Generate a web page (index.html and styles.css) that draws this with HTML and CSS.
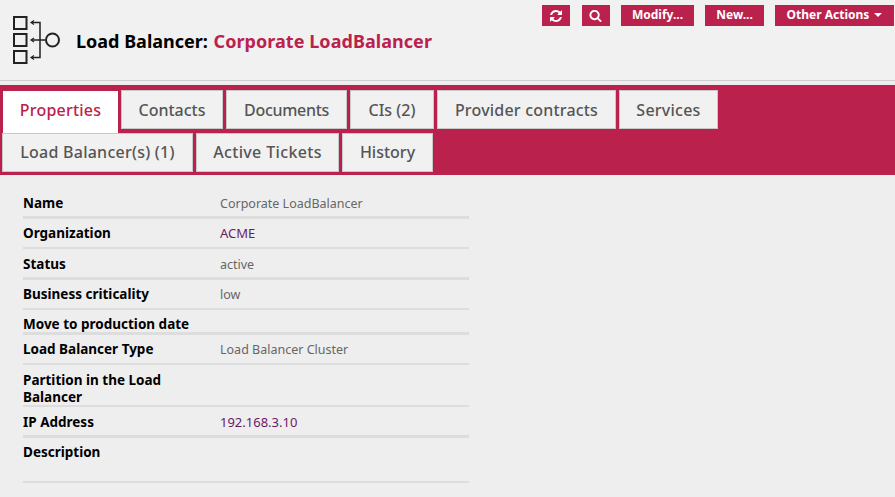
FILE: index.html
```html
<!DOCTYPE html>
<html lang="en">
<head>
    <meta charset="UTF-8">
    <meta name="viewport" content="width=device-width, initial-scale=1.0">
    <title>Load Balancer: Corporate LoadBalancer</title>
    <link rel="stylesheet" href="styles.css">
</head>
<body>
    <div class="header">
        <svg class="class-icon" width="58" height="50" viewBox="0 0 58 50" fill="none" stroke="#222" stroke-width="2">
            <rect x="2" y="2" width="12.500" height="12"/>
            <rect x="2" y="19" width="12.500" height="12"/>
            <rect x="2" y="36" width="12.500" height="12"/>
            <path d="M20 7.500H28V42.500H20M20 25H33" stroke-width="1.500"/>
            <path d="M22 5.500L19 7.500L22 9.500M22 23L19 25L22 27M22 40.500L19 42.500L22 44.500" stroke-width="1.200"/>
            <circle cx="40.500" cy="25" r="6.500"/>
        </svg>
        <h1>Load Balancer: <span class="object-name">Corporate LoadBalancer</span></h1>
        <div class="actions">
            <a class="action icon-action refresh">
                <svg width="14" height="14" viewBox="0 0 1792 1792" fill="#fff">
                    <path d="M1639 1056q0 5-1 7-64 268-268 434.500t-478 166.500q-146 0-282.500-55t-243.500-157l-129 129q-19 19-45 19t-45-19-19-45v-448q0-26 19-45t45-19h448q26 0 45 19t19 45-19 45l-137 137q71 66 161 102t187 36q134 0 250-65t186-179q11-17 53-117 8-23 30-23h192q13 0 22.500 9.500t9.500 22.500zm25-800v448q0 26-19 45t-45 19h-448q-26 0-45-19t-19-45 19-45l138-138q-148-137-349-137-134 0-250 65t-186 179q-11 17-53 117-8 23-30 23h-199q-13 0-22.500-9.500t-9.500-22.500v-7q65-268 270-434.500t480-166.500q146 0 284 55.500t245 156.500l130-129q19-19 45-19t45 19 19 45z"/>
                </svg>
            </a>
            <a class="action icon-action search">
                <svg width="13" height="13" viewBox="0 0 1792 1792" fill="#fff">
                    <path d="M1216 832q0-185-131.500-316.500t-316.500-131.500-316.500 131.500-131.500 316.500 131.500 316.500 316.500 131.500 316.500-131.500 131.500-316.500zm512 832q0 52-38 90t-90 38q-54 0-90-38l-343-342q-179 124-399 124-143 0-273.500-55.500t-225-150-150-225-55.500-273.500 55.500-273.500 150-225 225-150 273.500-55.500 273.500 55.500 225 150 150 225 55.500 273.500q0 220-124 399l343 343q37 37 37 90z"/>
                </svg>
            </a>
            <a class="action modify">Modify...</a>
            <a class="action new">New...</a>
            <a class="action other">Other Actions <span class="caret"></span></a>
        </div>
    </div>

    <div class="tabs">
        <a class="tab active">Properties</a>
        <a class="tab upper tab-contacts">Contacts</a>
        <a class="tab upper tab-documents">Documents</a>
        <a class="tab upper tab-cis">CIs (2)</a>
        <a class="tab upper tab-contracts">Provider contracts</a>
        <a class="tab upper tab-services">Services</a>
        <a class="tab tab-balancers">Load Balancer(s) (1)</a>
        <a class="tab tab-tickets">Active Tickets</a>
        <a class="tab tab-history">History</a>
    </div>

    <div class="details">
        <div class="row"><div class="label">Name</div><div class="value">Corporate LoadBalancer</div></div>
        <div class="row"><div class="label">Organization</div><div class="value"><a>ACME</a></div></div>
        <div class="row"><div class="label">Status</div><div class="value">active</div></div>
        <div class="row"><div class="label">Business criticality</div><div class="value">low</div></div>
        <div class="row"><div class="label">Move to production date</div><div class="value"></div></div>
        <div class="row"><div class="label">Load Balancer Type</div><div class="value">Load Balancer Cluster</div></div>
        <div class="row"><div class="label">Partition in the Load Balancer</div><div class="value"></div></div>
        <div class="row"><div class="label">IP Address</div><div class="value"><a>192.168.3.10</a></div></div>
        <div class="row description"><div class="label">Description</div><div class="value"></div></div>
    </div>
</body>
</html>
```

FILE: styles.css
```css
body {
    margin: 0;
    background-color: #eeeeee;
    font-family: "Noto Sans", Tahoma, sans-serif;
    font-size: 14px;
    color: #000;
    overflow: hidden;
}
.header {
    height: 80px;
    background-color: #f1f1f1;
    border-bottom: 1px solid #cfcfcf;
    display: flex;
    align-items: flex-start;
}
.class-icon {
    margin: 15px 0 0 12px;
    flex: none;
}
h1 {
    margin: 29px 0 0 6px;
    font-size: 18px;
    line-height: 24px;
    font-weight: bold;
    white-space: nowrap;
}
.object-name {
    margin-left: 1px;
    color: #bb214d;
    letter-spacing: 0.05px;
}
.actions {
    margin-left: auto;
    padding: 5px 1px 0 0;
    display: flex;
    gap: 11px;
}
.action {
    height: 21px;
    padding-bottom: 2px;
    box-sizing: border-box;
    background-color: #bb214d;
    color: #fff;
    font-size: 12px;
    font-weight: bold;
    line-height: 19px;
    display: flex;
    align-items: center;
    justify-content: center;
}
.icon-action {
    width: 28px;
    padding-bottom: 0;
}
.refresh { margin-right: 1px; }
.search svg { margin-right: 1px; }
.modify { width: 73px; }
.new { width: 59px; }
.other { width: 119px; }
.caret {
    display: inline-block;
    margin-left: 5px;
    border-left: 4px solid transparent;
    border-right: 4px solid transparent;
    border-top: 4px solid #fff;
}
.tabs {
    margin-top: 4px;
    height: 90px;
    background-color: #bb214d;
    padding: 5px 0 0 2px;
    box-sizing: border-box;
    display: flex;
    flex-wrap: wrap;
    align-items: flex-start;
    align-content: flex-start;
    column-gap: 3px;
    row-gap: 4px;
}
.tab {
    height: 39px;
    box-sizing: border-box;
    background-color: #f1f1f1;
    border: 1px solid #c8c8c8;
    color: #555;
    font-size: 16px;
    font-weight: 500;
    line-height: 37px;
    text-align: center;
}
.tab.upper {
    line-height: 39px;
}
.tab.active {
    width: 115px;
    margin: 1px 0 -4px 1px;
    height: 42px;
    background-color: #fff;
    border-color: #fff;
    color: #bb214d;
    letter-spacing: 0.2px;
}
.tab-contacts { width: 102px; }
.tab-documents { width: 121px; letter-spacing: -0.3px; }
.tab-cis { width: 84px; }
.tab-contracts { width: 179px; letter-spacing: 0.2px; }
.tab-services { width: 99px; letter-spacing: 0.25px; }
.tab-balancers { width: 191px; letter-spacing: 0.25px; }
.tab-tickets { width: 143px; letter-spacing: 0.35px; }
.tab-history { width: 91px; }
.details {
    width: 446px;
    margin: 13.400px 0 0 23px;
}
.row {
    display: grid;
    grid-template-columns: 197px 1fr;
    line-height: 17px;
}
.row::after {
    content: "";
    grid-column: 1 / -1;
    height: 2.400px;
    background-color: #dddddd;
}
.label {
    font-size: 13.500px;
    font-weight: bold;
    padding-top: 6.500px;
    margin-bottom: -1px;
}
.value {
    font-size: 12.500px;
    color: #666;
    padding: 6.500px 0 4.500px;
}
.value:empty {
    padding: 0;
}
.value a {
    font-size: 13px;
    color: #6b1a66;
}
.description .label {
    padding-bottom: 20.500px;
}
```
